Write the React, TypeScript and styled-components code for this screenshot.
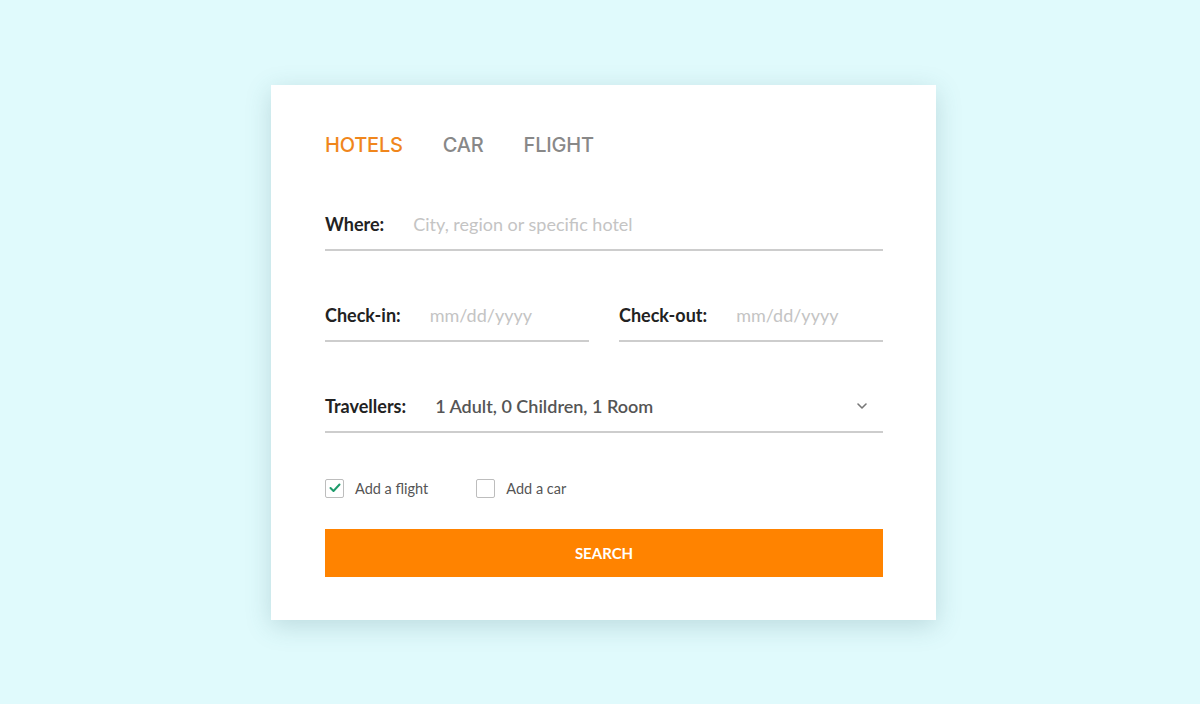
import React from "react";
import styled, { createGlobalStyle } from "styled-components";

const Global = createGlobalStyle`
  html, body { margin: 0; padding: 0; background: #e0fafc; }
  * { box-sizing: border-box; }
`;

const Page = styled.div`
  min-height: 704px;
  display: flex;
  align-items: center;
  justify-content: center;
  padding-left: 7px;
  font-family: Lato, "Open Sans", sans-serif;
`;

const Card = styled.div`
  width: 665px;
  height: 535px;
  background: #fff;
  box-shadow: 0 6px 24px rgba(60, 110, 120, 0.22);
  padding: 48px 53px 43px 54px;
  display: flex;
  flex-direction: column;
`;

const Tabs = styled.div`
  display: flex;
  gap: 40px;
  height: 24px;
  align-items: center;
  margin-bottom: 42px;
`;

const Tab = styled.span<{ $active?: boolean }>`
  font-family: Inter, "Open Sans", sans-serif;
  font-weight: 500;
  font-size: 20px;
  letter-spacing: -0.2px;
  color: ${(p) => (p.$active ? "#f0861c" : "#888888")};
`;

const Row = styled.div<{ $mt?: number }>`
  display: flex;
  gap: 30px;
  margin-top: ${(p) => p.$mt ?? 0}px;
`;

const Field = styled.label`
  flex: 1 1 0;
  min-width: 0;
  height: 52px;
  display: flex;
  align-items: center;
  gap: 29px;
  border-bottom: 2px solid #cdcdcd;
`;

const Label = styled.span`
  font-weight: 700;
  font-size: 18px;
  color: #222;
  white-space: nowrap;
`;

const Input = styled.input`
  flex: 1 1 0;
  width: 100%;
  min-width: 0;
  border: none;
  outline: none;
  background: transparent;
  font-family: Lato, sans-serif;
  font-size: 18px;
  color: #555;
  padding: 0;
  &::placeholder { color: #c4c4c4; }
`;

const Value = styled.span`
  flex: 1;
  font-size: 18px;
  font-weight: 600;
  color: #555;
`;

const Chevron = styled.svg`
  width: 14px;
  height: 14px;
  margin-right: 14px;
`;

const Checks = styled.div`
  display: flex;
  gap: 48px;
  margin-top: 46px;
  height: 20px;
  align-items: center;
`;

const Check = styled.label`
  display: flex;
  align-items: center;
  gap: 11px;
  font-size: 14.5px;
  color: #555;
`;

const Box = styled.span`
  width: 19px;
  height: 19px;
  border: 1.5px solid #bdbdbd;
  border-radius: 2px;
  display: flex;
  align-items: center;
  justify-content: center;
`;

const Button = styled.button`
  margin-top: 31px;
  height: 48px;
  width: 100%;
  border: none;
  background: #ff8300;
  color: #fff;
  font-family: Lato, sans-serif;
  font-weight: 700;
  font-size: 15px;
  cursor: pointer;
`;

export default function App() {
  return (
    <>
      <Global />
      <Page>
        <Card>
          <Tabs>
            <Tab $active>HOTELS</Tab>
            <Tab>CAR</Tab>
            <Tab>FLIGHT</Tab>
          </Tabs>
          <Row>
            <Field>
              <Label>Where:</Label>
              <Input placeholder="City, region or specific hotel" />
            </Field>
          </Row>
          <Row $mt={39}>
            <Field>
              <Label>Check-in:</Label>
              <Input placeholder="mm/dd/yyyy" />
            </Field>
            <Field>
              <Label>Check-out:</Label>
              <Input placeholder="mm/dd/yyyy" />
            </Field>
          </Row>
          <Row $mt={39}>
            <Field>
              <Label>Travellers:</Label>
              <Value>1 Adult, 0 Children, 1 Room</Value>
              <Chevron viewBox="0 0 14 14" fill="none" stroke="#777" strokeWidth="1.6" strokeLinecap="round" strokeLinejoin="round">
                <path d="M3 5l4 4 4-4" />
              </Chevron>
            </Field>
          </Row>
          <Checks>
            <Check>
              <Box>
                <svg width="12" height="10" viewBox="0 0 12 10" fill="none" stroke="#1e9b6b" strokeWidth="2" strokeLinecap="round" strokeLinejoin="round">
                  <path d="M1.5 5l3 3 6-6.5" />
                </svg>
              </Box>
              Add a flight
            </Check>
            <Check>
              <Box />
              Add a car
            </Check>
          </Checks>
          <Button>SEARCH</Button>
        </Card>
      </Page>
    </>
  );
}
